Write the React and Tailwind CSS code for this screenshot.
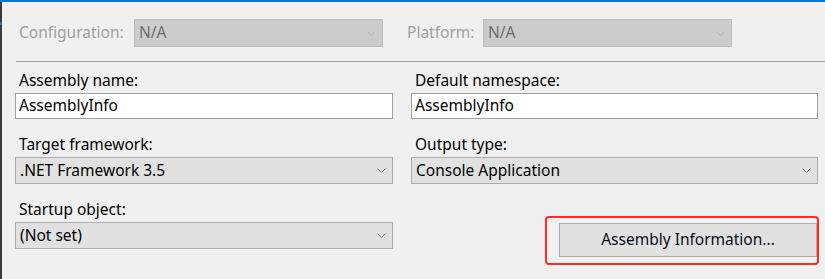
import React from "react"

const font = { fontFamily: '"Noto Sans", "Open Sans", sans-serif' }

function Chevron({ disabled }) {
  return (
    <svg width="9" height="5" viewBox="0 0 9 5" className="shrink-0">
      <path
        d="M0.5 0.5 L4.5 4.5 L8.5 0.5"
        fill="none"
        stroke={disabled ? "#b4b4b4" : "#707070"}
        strokeWidth="1"
      />
    </svg>
  )
}

function Combo({ value, disabled, className }) {
  return (
    <div
      className={
        "flex items-center justify-between border pl-[4px] pr-[6px] " +
        (disabled
          ? "h-[28px] bg-[#cccccc] border-[#bcbcbc] text-[#6d6d6d] "
          : "h-[27px] bg-[#e1e1e1] border-[#adadad] text-black ") +
        className
      }
    >
      <span className="leading-none">{value}</span>
      <Chevron disabled={disabled} />
    </div>
  )
}

function TextBox({ value }) {
  return (
    <div className="flex items-center h-[26px] bg-white border border-[#a0a0a0] pl-[3px] text-black">
      <span className="leading-none">{value}</span>
    </div>
  )
}

function Field({ label, children }) {
  return (
    <div className="flex flex-col">
      <div className="h-[20px] leading-[20px] pl-[4px] mb-[3px] text-black">{label}</div>
      {children}
    </div>
  )
}

export default function App() {
  return (
    <div
      className="w-[825px] h-[279px] bg-[#f0f0f0] border-t-2 border-[#0a78d4] text-[15.5px] overflow-hidden"
      style={font}
    >
      <div className="flex h-full">
        <div className="w-[2px] h-full bg-[#3a3a3a] relative">
          <div className="absolute left-0 top-[20px] w-[2px] h-[3px] bg-[#0a78d4]" />
        </div>
        <div className="flex-1 flex flex-col">
          <div className="flex items-center pt-[17px] pl-[17px]">
            <span className="text-[#a0a0a0] w-[115px]">Configuration:</span>
            <Combo value="N/A" disabled className="w-[249px]" />
            <span className="text-[#a0a0a0] ml-[24px] w-[76px]">Platform:</span>
            <Combo value="N/A" disabled className="w-[249px]" />
          </div>
          <div className="ml-[14px] mt-[14px] h-[1px] bg-[#a0a0a0]" />
          <div className="grid grid-cols-[378px_407px] gap-x-[18px] pl-[13px] pt-[8px]">
            <Field label="Assembly name:">
              <TextBox value="AssemblyInfo" />
            </Field>
            <Field label="Default namespace:">
              <TextBox value="AssemblyInfo" />
            </Field>
            <div className="mt-[15px]">
              <Field label="Target framework:">
                <Combo value=".NET Framework 3.5" className="w-full" />
              </Field>
            </div>
            <div className="mt-[15px]">
              <Field label="Output type:">
                <Combo value="Console Application" className="w-full" />
              </Field>
            </div>
            <div className="mt-[15px]">
              <Field label="Startup object:">
                <Combo value="(Not set)" className="w-full" />
              </Field>
            </div>
            <div className="flex justify-end pt-[32px] -mr-[1px]">
              <div className="border-2 border-[#ff2a2a] rounded-[4px] pt-[5px] pb-[6px] pl-[12px] pr-0">
                <button className="block w-[258px] h-[34px] bg-[#e1e1e1] border border-[#adadad] text-[#0c0c1e]">
                  Assembly Information...
                </button>
              </div>
            </div>
          </div>
        </div>
      </div>
    </div>
  )
}
